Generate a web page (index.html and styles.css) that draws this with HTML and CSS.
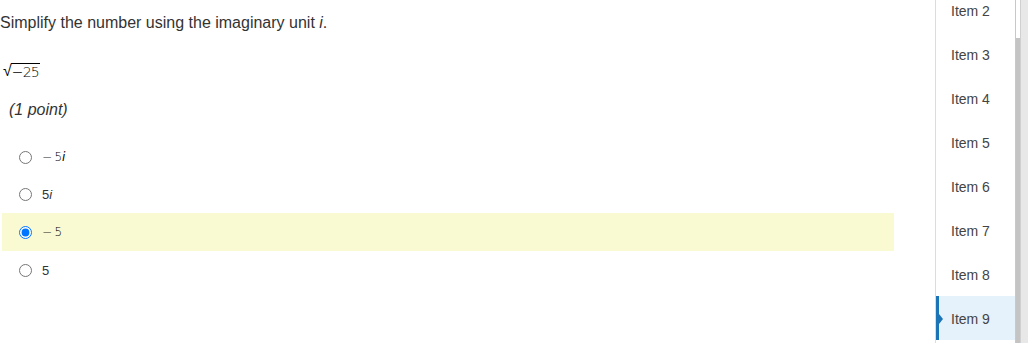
FILE: index.html
```html
<!DOCTYPE html>
<html>
<head>
<meta charset="utf-8">
<link rel="stylesheet" href="styles.css">
</head>
<body>
<div class="page">
  <main class="main">
    <p class="question">Simplify the number using the imaginary unit <i>i</i>.</p>
    <div class="math sqrt-line"><span class="radical">√</span><span class="radicand">−25</span></div>
    <p class="points">(1 point)</p>
    <ul class="options">
      <li class="option"><input type="radio" name="a"><span class="math opt-math">−&thinsp;5<i>i</i></span></li>
      <li class="option"><input type="radio" name="a"><span class="opt-text">5<i>i</i></span></li>
      <li class="option selected"><input type="radio" name="a" checked><span class="math opt-math">−&thinsp;5</span></li>
      <li class="option"><input type="radio" name="a"><span class="opt-text">5</span></li>
    </ul>
  </main>
  <aside class="sidebar">
    <ul class="items">
      <li class="item">Item 2</li>
      <li class="item">Item 3</li>
      <li class="item">Item 4</li>
      <li class="item">Item 5</li>
      <li class="item">Item 6</li>
      <li class="item">Item 7</li>
      <li class="item">Item 8</li>
      <li class="item current">Item 9</li>
    </ul>
    <div class="scrollbar"><div class="thumb"></div></div>
    <div class="gutter"></div>
  </aside>
</div>
</body>
</html>
```
FILE: styles.css
```css
html, body {
  margin: 0;
  padding: 0;
  background: #fff;
  height: 343px;
  overflow: hidden;
}
body {
  font-family: "Liberation Sans", Arial, sans-serif;
  color: #333;
}
.page {
  display: flex;
  height: 343px;
}
.main {
  width: 935px;
  border-right: 1px solid #dcdcdc;
  box-sizing: content-box;
}
.question {
  margin: 13px 0 0 0;
  font-size: 16px;
  line-height: 19px;
}
.math {
  font-family: "DejaVu Serif", "Liberation Serif", serif;
  color: #000;
}
.sqrt-line {
  margin: 29px 0 0 3px;
  display: flex;
  align-items: flex-end;
  height: 18px;
  font-size: 14px;
  line-height: 14px;
}
.radical {
  font-size: 16px;
  line-height: 16px;
  font-family: "DejaVu Sans", sans-serif;
  font-weight: 300;
  margin-right: -1px;
}
.radicand {
  border-top: 1px solid #000;
  padding: 1px 1px 0 1px;
  font-family: "DejaVu Sans", sans-serif;
  font-weight: 300;
  letter-spacing: -0.8px;
}
.points {
  margin: 21px 0 0 9px;
  font-size: 16px;
  line-height: 19px;
  font-style: italic;
}
.options {
  list-style: none;
  margin: 19px 0 0 2px;
  padding: 0;
  width: 892px;
}
.option {
  height: 38px;
  display: flex;
  align-items: center;
}
.option:nth-child(2) { height: 37px; }
.option.selected { background: #fafad2; }
.option input {
  margin: 0 10px 0 17px;
  width: 13px;
  height: 13px;
}
.opt-text {
  font-size: 13px;
  color: #333;
}
.opt-math {
  font-size: 12px;
  font-family: "DejaVu Sans", sans-serif;
  font-weight: 300;
}
.sidebar {
  flex: 1;
  display: flex;
  overflow: hidden;
}
.items {
  list-style: none;
  margin: -12px 0 0 0;
  padding: 0;
  width: 79px;
}
.item {
  height: 41px;
  line-height: 41px;
  padding: 3px 0 0 15px;
  font-size: 14px;
  color: #444;
  position: relative;
}
.item.current {
  background: #e5f1fb;
  border-left: 3px solid #1a74b5;
  padding-left: 12px;
}
.item.current::after {
  content: "";
  position: absolute;
  left: 0;
  top: 18px;
  border-left: 4px solid #1a74b5;
  border-top: 5px solid transparent;
  border-bottom: 5px solid transparent;
}
.scrollbar {
  width: 4px;
  border-left: 1px solid #c8c8c8;
  border-right: 1px solid #d0d0d0;
  background: #fff;
  position: relative;
}
.thumb {
  margin-top: 38px;
  height: 305px;
  background: #c4c4c4;
}
.gutter {
  flex: 1;
  background: #e8e8e8;
}
```
